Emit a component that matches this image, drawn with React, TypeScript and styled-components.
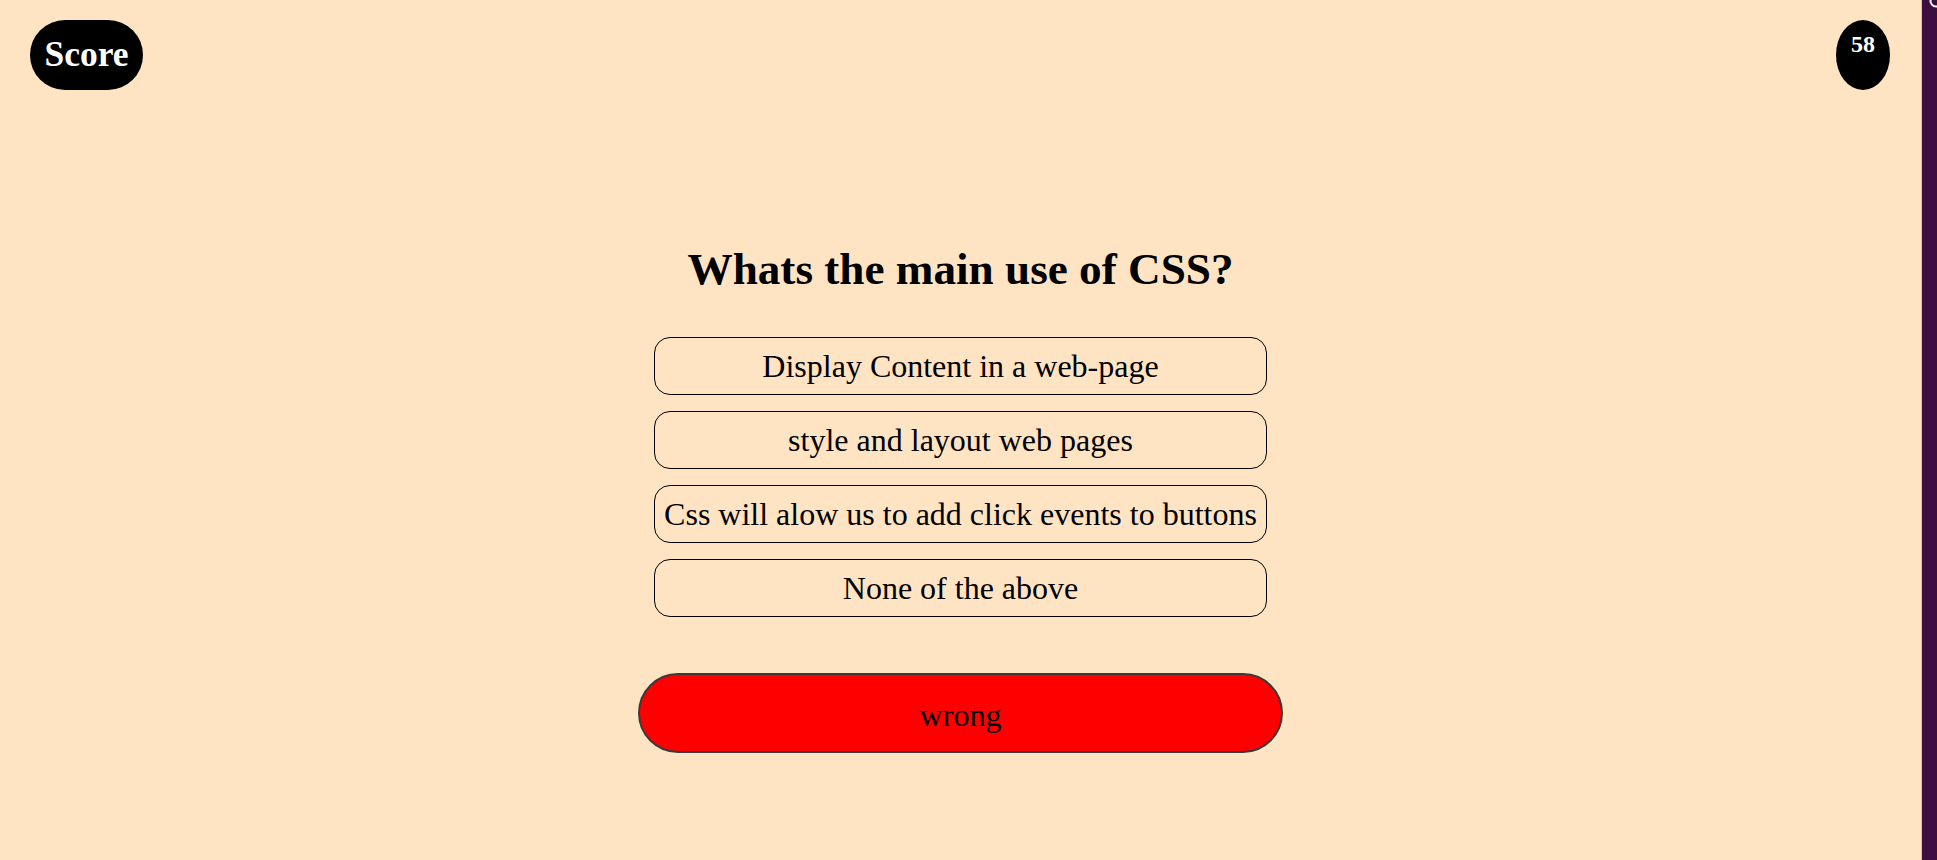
import React from "react";
import styled, { createGlobalStyle } from "styled-components";

const GlobalStyle = createGlobalStyle`
  html, body {
    margin: 0;
    padding: 0;
    background: #ffe4c4;
    font-family: "Liberation Serif", "Times New Roman", serif;
    overflow: hidden;
  }
`;

const Shell = styled.div`
  display: flex;
  width: 1937px;
  height: 860px;
`;

const Page = styled.main`
  flex: 0 0 1921px;
  display: flex;
  flex-direction: column;
  background: #ffe4c4;
`;

const SideStrip = styled.aside`
  flex: 1;
  position: relative;
  background: #3c0f40;
  border-left: 1px solid #c9c3c4;
  overflow: hidden;
`;

const StripMark = styled.svg`
  position: absolute;
  top: 0;
  left: 0;
`;

const Header = styled.header`
  display: flex;
  justify-content: space-between;
  align-items: flex-start;
  padding: 20px 31px 0 30px;
`;

const ScorePill = styled.div`
  width: 113px;
  height: 70px;
  border-radius: 35px;
  background: #000;
  color: #fff;
  font-weight: bold;
  font-size: 35.5px;
  display: flex;
  align-items: center;
  justify-content: center;
  padding-bottom: 3px;
  box-sizing: border-box;
`;

const Timer = styled.div`
  width: 54px;
  height: 70px;
  border-radius: 50%;
  background: #000;
  color: #fff;
  font-weight: bold;
  font-size: 24px;
  line-height: 28px;
  text-align: center;
  padding-top: 10px;
  box-sizing: border-box;
`;

const Quiz = styled.section`
  display: flex;
  flex-direction: column;
  align-items: center;
  margin-top: 153px;
`;

const Question = styled.h1`
  margin: 0;
  font-size: 45.2px;
  font-weight: bold;
  line-height: 52px;
  color: #000;
`;

const Options = styled.div`
  display: flex;
  flex-direction: column;
  gap: 16px;
  margin-top: 42px;
  width: 613px;
`;

const Option = styled.button`
  height: 58px;
  width: 100%;
  padding: 0;
  border: 1px solid #000;
  border-radius: 16px;
  background: transparent;
  color: #000;
  font-family: "Liberation Serif", "Times New Roman", serif;
  font-size: 32px;
  white-space: nowrap;
  cursor: pointer;
`;

const Feedback = styled.div<{ $correct: boolean }>`
  margin-top: 56px;
  width: 645px;
  height: 80px;
  box-sizing: border-box;
  border: 2px solid #3a3a3a;
  border-radius: 40px;
  background: ${(p) => (p.$correct ? "#00c000" : "#ff0000")};
  color: #000;
  font-size: 32px;
  display: flex;
  align-items: center;
  justify-content: center;
  padding-top: 4px;
`;

const answers = [
  "Display Content in a web-page",
  "style and layout web pages",
  "Css will alow us to add click events to buttons",
  "None of the above",
];

export default function App() {
  return (
    <>
      <GlobalStyle />
      <Shell>
        <Page>
          <Header>
            <ScorePill>Score</ScorePill>
            <Timer>58</Timer>
          </Header>
          <Quiz>
            <Question>Whats the main use of CSS?</Question>
            <Options>
              {answers.map((a) => (
                <Option key={a}>{a}</Option>
              ))}
            </Options>
            <Feedback $correct={false}>wrong</Feedback>
          </Quiz>
        </Page>
        <SideStrip>
          <StripMark width="15" height="12" viewBox="0 0 15 12">
            <circle cx="14" cy="1" r="5.5" fill="none" stroke="#fff" strokeWidth="2" />
          </StripMark>
        </SideStrip>
      </Shell>
    </>
  );
}
